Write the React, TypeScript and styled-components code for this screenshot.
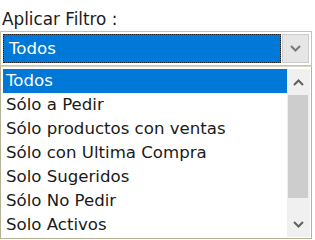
import React from "react";
import styled, { createGlobalStyle } from "styled-components";

const Global = createGlobalStyle`
  html, body { margin: 0; padding: 0; background: #ffffff; }
  body { font-family: "DejaVu Sans", "Liberation Sans", sans-serif; }
`;

const Panel = styled.div`
  width: 313px;
  display: flex;
  flex-direction: column;
`;

const Label = styled.div`
  height: 31px;
  padding-left: 2px;
  box-sizing: border-box;
  padding-top: 10px;
  font-size: 16.8px;
  line-height: 18px;
  color: #1a1a1a;
`;

const Combo = styled.div`
  width: 312px;
  height: 35px;
  box-sizing: border-box;
  border: 1px solid #c6c3a6;
  background: #ffffff;
  padding: 2px;
  display: flex;
  gap: 1px;
`;

const Field = styled.div`
  flex: 1;
  background: #0078d7;
  border: 1px dotted #f5a623;
  outline: 1px dotted #222;
  outline-offset: -1px;
  color: #ffffff;
  font-size: 16.6px;
  line-height: 27px;
  padding-left: 5px;
  box-sizing: border-box;
`;

const DropButton = styled.div`
  width: 27px;
  box-sizing: border-box;
  background: #e6e6e6;
  border: 1px solid #cccccc;
  display: flex;
  align-items: center;
  justify-content: center;
`;

const List = styled.div`
  width: 312px;
  height: 173px;
  box-sizing: border-box;
  border: 1px solid #b3b196;
  border-top-color: #d8d6c4;
  padding: 2px 1px 1px 2px;
  display: flex;
  background: #ffffff;
`;

const Items = styled.div`
  flex: 1;
  display: flex;
  flex-direction: column;
`;

const Item = styled.div<{ $selected?: boolean }>`
  height: 24px;
  flex: none;
  font-size: 16.6px;
  line-height: 24px;
  padding-left: 3px;
  white-space: nowrap;
  color: ${(p) => (p.$selected ? "#ffffff" : "#1a1a1a")};
  background: ${(p) => (p.$selected ? "#0078d7" : "transparent")};
`;

const Scrollbar = styled.div`
  width: 23px;
  background: #f0f0f0;
  display: flex;
  flex-direction: column;
`;

const ArrowBox = styled.div`
  height: 26px;
  display: flex;
  align-items: center;
  justify-content: center;
  flex: none;
`;

const Track = styled.div`
  flex: 1;
  display: flex;
  flex-direction: column;
`;

const Thumb = styled.div`
  height: 103px;
  margin: 0 2px 0 1px;
  background: #cdcdcd;
`;

const Chevron = ({ up, color, w = 11 }: { up?: boolean; color: string; w?: number }) => (
  <svg width={w} height={7} viewBox="0 0 11 7">
    <path
      d={up ? "M1 6 L5.5 1.5 L10 6" : "M1 1 L5.5 5.5 L10 1"}
      fill="none"
      stroke={color}
      strokeWidth={2}
    />
  </svg>
);

const options = [
  "Todos",
  "Sólo a Pedir",
  "Sólo productos con ventas",
  "Sólo con Ultima Compra",
  "Solo Sugeridos",
  "Sólo No Pedir",
  "Solo Activos",
];

export default function App() {
  return (
    <>
      <Global />
      <Panel>
        <Label>Aplicar Filtro :</Label>
        <Combo>
          <Field>Todos</Field>
          <DropButton>
            <Chevron color="#7a7a7a" w={11} />
          </DropButton>
        </Combo>
        <List>
          <Items>
            {options.map((o, i) => (
              <Item key={o} $selected={i === 0}>
                {o}
              </Item>
            ))}
          </Items>
          <Scrollbar>
            <ArrowBox>
              <Chevron up color="#606060" />
            </ArrowBox>
            <Track>
              <Thumb />
            </Track>
            <ArrowBox>
              <Chevron color="#606060" />
            </ArrowBox>
          </Scrollbar>
        </List>
      </Panel>
    </>
  );
}
